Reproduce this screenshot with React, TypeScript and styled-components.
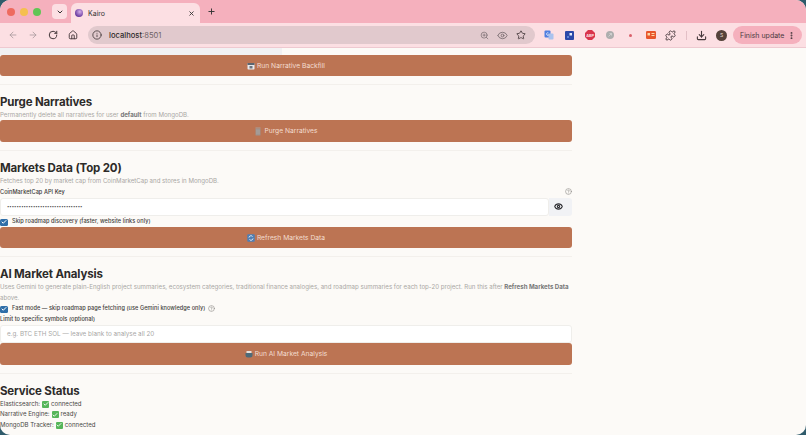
import React from 'react';
import styled, { createGlobalStyle } from 'styled-components';
import { ArrowLeft, ArrowRight, RotateCw, House, Info, ZoomIn, Eye, Star, Puzzle, Download, EllipsisVertical, ChevronDown, X, Plus, CircleHelp, Check } from 'lucide-react';

const GlobalStyle = createGlobalStyle`
  html, body { margin: 0; padding: 0; height: 100%; overflow: hidden; background: #2f5b6b; }
  #root { height: 100%; }
  * { box-sizing: border-box; }
`;

const Window = styled.div`
  width: 806px;
  height: 435px;
  border-radius: 10px;
  overflow: hidden;
  display: flex;
  flex-direction: column;
  background: #fcfaf7;
  font-family: "Inter", "Liberation Sans", sans-serif;
`;

const TabStrip = styled.div`
  height: 23px;
  flex: none;
  background: #f5b0bd;
  display: flex;
  align-items: flex-end;
  padding-left: 7px;
`;

const Lights = styled.div`
  display: flex;
  gap: 5px;
  align-self: center;
  margin-right: 11px;
`;

const Light = styled.span<{ $color: string }>`
  width: 8px;
  height: 8px;
  border-radius: 50%;
  background: ${({ $color }) => $color};
`;

const TabList = styled.button`
  width: 15px;
  height: 15px;
  padding: 0;
  border: none;
  border-radius: 4px;
  background: #fcdfe3;
  color: #333;
  display: flex;
  align-items: center;
  justify-content: center;
  align-self: center;
  margin-right: 4px;
`;

const Tab = styled.div`
  width: 129px;
  height: 20px;
  background: #fcdfe3;
  border-radius: 6px 6px 0 0;
  display: flex;
  align-items: center;
  padding: 0 5px 0 4px;
  gap: 5px;
  font-size: 7px;
  color: #333;
`;

const TabTitle = styled.span`
  flex: 1;
`;

const Favicon = styled.span`
  width: 8px;
  height: 8px;
  border-radius: 50%;
  background: radial-gradient(circle at 60% 35%, #d3aee8, #6a3aa0 70%);
`;

const NewTab = styled.span`
  display: flex;
  align-self: center;
  margin-left: 7px;
  color: #333;
`;

const Toolbar = styled.div`
  height: 25px;
  flex: none;
  background: #fcdfe3;
  border-bottom: 1px solid #eec9d0;
  display: flex;
  align-items: center;
  padding: 0 4px 0 6px;
`;

const NavIcon = styled.span<{ $off?: boolean; $dim?: boolean; $w?: number }>`
  width: ${({ $w }) => $w ?? 20}px;
  display: flex;
  justify-content: center;
  align-items: center;
  flex: none;
  color: ${({ $off, $dim }) => ($off ? '#a99a9e' : $dim ? '#7c6f73' : '#45383b')};
`;

const NavGroup = styled.div`
  display: flex;
  margin-left: -3px;
  margin-right: 5px;
`;

const Omnibox = styled.div`
  width: 447px;
  height: 18px;
  border-radius: 9px;
  background: #e1c9cd;
  display: flex;
  align-items: center;
  padding: 0 5px 0 3px;
  font-size: 7.6px;
  color: #2f2a2b;
  margin-right: 4px;
`;

const Address = styled.span`
  flex: 1;
  margin-left: 6px;
  font-weight: 500;
`;

const Port = styled.span`
  color: #6f6366;
  font-weight: 400;
`;

const ExtSlot = styled.span`
  width: 20.3px;
  flex: none;
  display: flex;
  justify-content: center;
  align-items: center;
  color: #45383b;
`;

const Separator = styled.span`
  width: 1px;
  height: 9px;
  background: #e3bfc6;
  margin: 0 4px 0 5px;
`;

const Avatar = styled.span`
  width: 11px;
  height: 11px;
  border-radius: 50%;
  background: #54423a;
  color: #e8dcd6;
  font-size: 5px;
  display: flex;
  align-items: center;
  justify-content: center;
  margin: 0 6px 0 5px;
`;

const Update = styled.div`
  width: 69px;
  height: 18px;
  border-radius: 9px;
  background: #f5b0bd;
  display: flex;
  align-items: center;
  padding-left: 7px;
  font-size: 7px;
  color: #4a3a3e;
  gap: 3px;
  white-space: nowrap;
`;

const Page = styled.main`
  flex: 1;
  width: 572px;
  color: #2d2b29;
  overflow: hidden;
`;

const ScrolledBar = styled.div`
  width: 282px;
  height: 6.8px;
  background: #f1f1f3;
`;

const Section = styled.section`
  padding-bottom: 8px;
  margin-bottom: 8px;
  border-bottom: 1px solid #f3f0ec;
  &:last-child { border-bottom: none; }
`;

const Heading = styled.h2`
  margin: 0;
  padding-top: 3px;
  font-size: 11.5px;
  letter-spacing: -0.16px;
  line-height: 13px;
  font-weight: 700;
  color: #2d2b29;
`;

const Caption = styled.p`
  margin: 0;
  font-size: 6.12px;
  line-height: 11px;
  color: #a9a7a4;
  b { color: #777; font-weight: 700; }
`;

const Action = styled.button`
  display: flex;
  width: 100%;
  height: 21.5px;
  padding: 0;
  border: none;
  border-radius: 3px;
  background: #bc7453;
  color: #f3ddd0;
  font: inherit;
  font-size: 6.7px;
  align-items: center;
  justify-content: center;
  gap: 2px;
`;

const FieldLabel = styled.div`
  display: flex;
  justify-content: space-between;
  align-items: center;
  font-size: 5.6px;
  font-weight: 500;
  letter-spacing: 0.05px;
  line-height: 8px;
  padding-top: 2px;
  margin-bottom: 2px;
  color: #3a3836;
`;

const Help = styled.span`
  display: inline-flex;
  color: #8b8986;
`;

const InlineHelp = styled(Help)`
  margin-left: -2px;
`;

const SecretRow = styled.div`
  display: flex;
  height: 18px;
`;

const Input = styled.div<{ $placeholder?: boolean; $secret?: boolean }>`
  flex: 1;
  height: 18px;
  background: #fff;
  border: 1px solid #efeeeb;
  border-radius: 3px;
  display: flex;
  align-items: center;
  padding-left: 6px;
  font-size: ${({ $secret }) => ($secret ? '4.2px' : '6.3px')};
  color: ${({ $placeholder }) => ($placeholder ? '#a8a7a6' : '#4a4846')};
`;

const EyeBox = styled.span`
  width: 23px;
  padding-right: 5px;
  background: #f1f2f5;
  border-radius: 0 3px 3px 0;
  display: flex;
  align-items: center;
  justify-content: center;
  color: #2c2c30;
`;

const CheckRow = styled.div<{ $h: number }>`
  display: flex;
  align-items: center;
  gap: 4.5px;
  height: ${({ $h }) => $h}px;
  font-size: 5.6px;
  font-weight: 500;
  letter-spacing: 0.05px;
  color: #3f3d3b;
`;

const Tick = styled.span`
  width: 7.5px;
  height: 7.5px;
  border-radius: 1.5px;
  background: #2f6ea8;
  color: #fff;
  display: flex;
  align-items: center;
  justify-content: center;
  margin-top: 2px;
`;

const StatusList = styled.div`
  margin-top: 1px;
`;

const StatusLine = styled.div`
  display: flex;
  align-items: center;
  gap: 2px;
  font-size: 6.1px;
  line-height: 10.5px;
  color: #4a4846;
`;

const GreenCheck = styled.span`
  width: 7px;
  height: 7px;
  border-radius: 1px;
  background: #56b65a;
  color: #fff;
  display: inline-flex;
  align-items: center;
  justify-content: center;
`;

const Calendar = () => (
  <svg width="8" height="8" viewBox="0 0 16 16">
    <rect x="1" y="2" width="14" height="13" rx="1.5" fill="#e8e8ec" />
    <rect x="1" y="2" width="14" height="4" fill="#5d6570" />
    <rect x="5" y="8" width="6" height="5" fill="#6d7480" />
  </svg>
);

const Trash = () => (
  <svg width="8" height="9" viewBox="0 0 16 18">
    <rect x="3" y="1" width="10" height="2" fill="#a9a09c" />
    <rect x="3" y="3" width="10" height="14" rx="1" fill="#9b918d" />
    <path d="M6 5v10M10 5v10" stroke="#c3b9b4" strokeWidth="1" />
  </svg>
);

const Refresh = () => (
  <svg width="8" height="8" viewBox="0 0 16 16">
    <rect x="0.5" y="0.5" width="15" height="15" rx="2" fill="#4f7fb5" />
    <path d="M4 7a4 4 0 0 1 7-2M12 9a4 4 0 0 1-7 2" fill="none" stroke="#fff" strokeWidth="1.8" />
  </svg>
);

const Bowl = () => (
  <svg width="8" height="8" viewBox="0 0 16 16">
    <path d="M3 2h10v4H3z" fill="#e7e2dd" />
    <path d="M1 6h14v4a5 5 0 0 1-5 5H6a5 5 0 0 1-5-5z" fill="#4e6a78" />
  </svg>
);

const Box = () => (
  <GreenCheck><Check size={6} strokeWidth={3.5} /></GreenCheck>
);

const TranslateExt = () => (
  <svg width="10" height="10" viewBox="0 0 20 20">
    <rect x="1" y="1" width="12" height="14" rx="2" fill="#4f7fe0" />
    <rect x="9" y="7" width="10" height="12" rx="2" fill="#a9c2ee" />
    <path d="M9 6a2.5 2.5 0 1 0 0 4h-2" fill="none" stroke="#fff" strokeWidth="1.4" />
  </svg>
);

const BlueExt = () => (
  <svg width="9" height="9" viewBox="0 0 18 18">
    <rect width="18" height="18" rx="2" fill="#2b48a8" />
    <rect x="9" y="4" width="5" height="5" fill="#e4ecfa" />
    <circle cx="6" cy="12" r="2" fill="#6f95e0" />
  </svg>
);

const AdblockExt = () => (
  <svg width="10" height="10" viewBox="0 0 20 20">
    <path d="M6 0h8l6 6v8l-6 6H6l-6-6V6z" fill="#d9354c" />
    <text x="10" y="13" textAnchor="middle" fontSize="7.5" fontWeight="700" fill="#fbe3e6">ABP</text>
  </svg>
);

const GreyExt = () => (
  <svg width="8" height="8" viewBox="0 0 16 16">
    <circle cx="8" cy="8" r="8" fill="#aeaeae" />
    <path d="M5 11l6-6M7 5h4v4" fill="none" stroke="#d5d5d5" strokeWidth="1.6" />
  </svg>
);

const DotExt = () => (
  <svg width="3" height="3" viewBox="0 0 6 6">
    <circle cx="3" cy="3" r="3" fill="#d9606a" />
  </svg>
);

const OrangeExt = () => (
  <svg width="10" height="8" viewBox="0 0 20 16">
    <rect width="20" height="16" rx="2.5" fill="#e8552b" />
    <rect x="3" y="4" width="5" height="5" fill="#fbd9a8" />
    <rect x="11" y="4" width="6" height="2" fill="#fbd9a8" />
    <rect x="11" y="8" width="6" height="2" fill="#fbd9a8" />
  </svg>
);

export default function App() {
  return (
    <Window>
      <GlobalStyle />
      <TabStrip>
        <Lights>
          <Light $color="#ee6a5f" />
          <Light $color="#f5bf4f" />
          <Light $color="#61c554" />
        </Lights>
        <TabList><ChevronDown size={8} strokeWidth={3} /></TabList>
        <Tab>
          <Favicon />
          <TabTitle>Kairo</TabTitle>
          <X size={7} strokeWidth={3} />
        </Tab>
        <NewTab><Plus size={9} strokeWidth={2.5} /></NewTab>
      </TabStrip>
      <Toolbar>
        <NavGroup>
          <NavIcon $off><ArrowLeft size={10} /></NavIcon>
          <NavIcon $off><ArrowRight size={10} /></NavIcon>
          <NavIcon><RotateCw size={10} strokeWidth={2.4} /></NavIcon>
          <NavIcon><House size={10} strokeWidth={2.2} /></NavIcon>
        </NavGroup>
        <Omnibox>
          <NavIcon $w={12}><Info size={10} /></NavIcon>
          <Address>localhost<Port>:8501</Port></Address>
          <NavIcon $dim $w={18}><ZoomIn size={9} /></NavIcon>
          <NavIcon $dim $w={18}><Eye size={11} /></NavIcon>
          <NavIcon $w={18}><Star size={10} /></NavIcon>
        </Omnibox>
        <ExtSlot><TranslateExt /></ExtSlot>
        <ExtSlot><BlueExt /></ExtSlot>
        <ExtSlot><AdblockExt /></ExtSlot>
        <ExtSlot><GreyExt /></ExtSlot>
        <ExtSlot><DotExt /></ExtSlot>
        <ExtSlot><OrangeExt /></ExtSlot>
        <ExtSlot><Puzzle size={11} strokeWidth={2} /></ExtSlot>
        <Separator />
        <NavIcon $w={20}><Download size={11} strokeWidth={2.4} /></NavIcon>
        <Avatar>S</Avatar>
        <Update>Finish update<EllipsisVertical size={9} strokeWidth={3} /></Update>
      </Toolbar>
      <Page>
        <ScrolledBar />
        <Section>
          <Action><Calendar /> Run Narrative Backfill</Action>
        </Section>
        <Section>
          <Heading>Purge Narratives</Heading>
          <Caption>Permanently delete all narratives for user <b>default</b> from MongoDB.</Caption>
          <Action><Trash /> Purge Narratives</Action>
        </Section>
        <Section>
          <Heading>Markets Data (Top 20)</Heading>
          <Caption>Fetches top 20 by market cap from CoinMarketCap and stores in MongoDB.</Caption>
          <FieldLabel>CoinMarketCap API Key <Help><CircleHelp size={7} /></Help></FieldLabel>
          <SecretRow>
            <Input $secret>••••••••••••••••••••••••••••••••</Input>
            <EyeBox><Eye size={9} strokeWidth={3} /></EyeBox>
          </SecretRow>
          <CheckRow $h={11}><Tick><Check size={6} strokeWidth={4} /></Tick>Skip roadmap discovery (faster, website links only)</CheckRow>
          <Action><Refresh /> Refresh Markets Data</Action>
        </Section>
        <Section>
          <Heading>AI Market Analysis</Heading>
          <Caption>Uses Gemini to generate plain-English project summaries, ecosystem categories, traditional finance analogies, and roadmap summaries for each top-20 project. Run this after <b>Refresh Markets Data</b> above.</Caption>
          <CheckRow $h={10}><Tick><Check size={6} strokeWidth={4} /></Tick>Fast mode — skip roadmap page fetching (use Gemini knowledge only) <InlineHelp><CircleHelp size={7} /></InlineHelp></CheckRow>
          <FieldLabel>Limit to specific symbols (optional)</FieldLabel>
          <Input $placeholder>e.g. BTC ETH SOL — leave blank to analyse all 20</Input>
          <Action><Bowl /> Run AI Market Analysis</Action>
        </Section>
        <Section>
          <Heading>Service Status</Heading>
          <StatusList>
            <StatusLine>Elasticsearch: <Box /> connected</StatusLine>
            <StatusLine>Narrative Engine: <Box /> ready</StatusLine>
            <StatusLine>MongoDB Tracker: <Box /> connected</StatusLine>
          </StatusList>
        </Section>
      </Page>
    </Window>
  );
}
